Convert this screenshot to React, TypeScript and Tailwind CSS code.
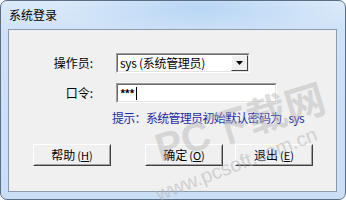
import React from "react";

const font = { fontFamily: '"Noto Sans CJK SC", "Liberation Sans", sans-serif' };

const ClassicButton = ({ label, hot }: { label: string; hot: string }) => (
  <div className="w-[78px] h-[22px] border border-t-white border-l-white border-r-[#404040] border-b-[#404040] bg-[#f0f0f0]">
    <div className="w-full h-full border border-t-[#f0f0f0] border-l-[#f0f0f0] border-r-[#a0a0a0] border-b-[#a0a0a0] flex items-center justify-center text-[12px] leading-none text-black">
      {label}
      <span className="ml-[2px] text-[11px]">(<span className="underline">{hot}</span>)</span>
    </div>
  </div>
);

const Sunken = ({ className, children }: { className: string; children: React.ReactNode }) => (
  <div className={`border border-t-[#a0a0a0] border-l-[#a0a0a0] border-r-white border-b-white ${className}`}>
    <div className="w-full h-full border border-t-[#696969] border-l-[#696969] border-r-[#e3e3e3] border-b-[#e3e3e3] bg-white flex items-center">
      {children}
    </div>
  </div>
);

export default function App() {
  return (
    <div className="w-[346px] h-[200px] bg-white relative overflow-hidden" style={font}>
      <div className="w-full h-full rounded-[7px] border border-[#5a6f86] bg-[radial-gradient(ellipse_140px_28px_at_200px_8px,#b8d6f5,transparent),linear-gradient(#dceaf9,#cfe2f6_30px,#cadff5)] flex flex-col pl-[7px] pr-[8px] pb-[7px]">
        <div className="h-[28px] flex items-center pl-[1px] pb-[1px] text-[12px] text-black shrink-0">系统登录</div>
        <div className="flex-1 border border-[#8a9bae] bg-[#f0f0f0] relative">
          <div className="flex items-center mt-[23px]">
            <div className="w-[84px] text-right text-[12px] text-black">操作员:</div>
            <Sunken className="ml-[23px] w-[134px] h-[20px]">
              <span className="flex-1 pl-[2px] text-[12px] leading-none text-black tracking-[-0.3px]">sys (系统管理员)</span>
              <div className="w-[17px] h-[16px] border border-t-white border-l-white border-r-[#404040] border-b-[#404040] bg-[#f0f0f0] flex items-center justify-center">
                <svg width="7" height="4" viewBox="0 0 7 4"><path d="M0 0h7L3.5 4z" fill="#000" /></svg>
              </div>
            </Sunken>
          </div>
          <div className="flex items-center mt-[10px]">
            <div className="w-[84px] text-right text-[12px] text-black">口令:</div>
            <Sunken className="ml-[23px] w-[161px] h-[20px]">
              <span className="pl-[2px] text-[11px] leading-none text-black font-bold tracking-[-1px]">***</span>
              <span className="ml-[2px] w-[1px] h-[13px] bg-black" />
            </Sunken>
          </div>
          <div className="mt-[6px] ml-[103px] text-[12px] text-[#1c2aa0] whitespace-nowrap tracking-[-0.7px]">
            提示：系统管理员初始默认密码为<span className="ml-[7px]">sys</span>
          </div>
          <div className="flex mt-[17px] ml-[24px] gap-[37px]">
            <ClassicButton label="帮助" hot="H" />
            <div className="-ml-[3px]">
              <ClassicButton label="确定" hot="O" />
            </div>
            <div className="-ml-[25px]">
              <ClassicButton label="退出" hot="E" />
            </div>
          </div>
        </div>
      </div>
      <div className="absolute left-[162px] top-[128px] leading-none origin-bottom-left -rotate-[17deg] text-[40px] font-bold text-[#b4b4b4]/45 pointer-events-none whitespace-nowrap" style={{ fontFamily: '"Liberation Sans", "Noto Sans CJK SC", sans-serif' }}>
        PC下载网
      </div>
      <div className="absolute left-[160px] top-[184px] leading-none origin-bottom-left -rotate-[21deg] text-[20px] text-[#b4b4b4]/55 pointer-events-none whitespace-nowrap" style={{ fontFamily: '"Liberation Sans", sans-serif' }}>
        www.pcsoft.com.cn
      </div>
    </div>
  );
}
